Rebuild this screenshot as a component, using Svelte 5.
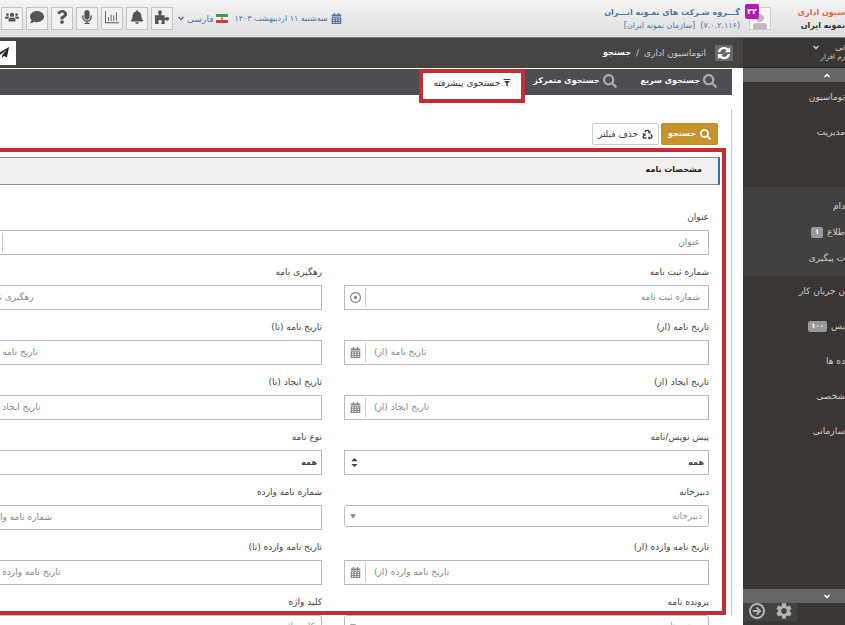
<script>
  /*
    Advanced letter search — office automation shell.

    Right-to-left page: top header, side menu on the right,
    breadcrumb + search tabs above the filter form.
  */

  // [viewBox, path]
  const icons = {
    search: ["0 0 512 512", "M505 442.7L405.3 343c-4.5-4.5-10.6-7-17-7H372c27.6-35.3 44-79.7 44-128C416 93.1 322.9 0 208 0S0 93.1 0 208s93.1 208 208 208c48.3 0 92.7-16.4 128-44v16.3c0 6.4 2.5 12.5 7 17l99.7 99.7c9.4 9.4 24.6 9.4 33.9 0l28.3-28.3c9.4-9.4 9.4-24.6.1-34zM208 336c-70.7 0-128-57.2-128-128 0-70.7 57.2-128 128-128 70.7 0 128 57.2 128 128 0 70.7-57.2 128-128 128z"],
    bell: ["0 0 448 512", "M224 512c35.32 0 63.97-28.65 63.97-64H160.03c0 35.35 28.65 64 63.97 64zm215.39-149.71c-19.32-20.76-55.47-51.99-55.47-154.29 0-77.7-54.48-139.9-127.94-155.16V32c0-17.67-14.32-32-31.98-32s-31.98 14.33-31.98 32v20.84C118.56 68.1 64.08 130.3 64.08 208c0 102.3-36.15 133.53-55.47 154.29-6 6.45-8.66 14.16-8.61 21.71.11 16.4 12.98 32 32.1 32h383.8c19.12 0 32-15.6 32.1-32 .05-7.55-2.61-15.27-8.61-21.71z"],
    comment: ["0 0 512 512", "M256 32C114.6 32 0 125.1 0 240c0 49.6 21.4 95 57 130.7C44.5 421.1 2.7 466 2.2 466.5c-2.2 2.3-2.8 5.7-1.5 8.7S4.8 480 8 480c66.3 0 116-31.8 140.6-51.4 32.7 12.3 69 19.4 107.4 19.4 141.4 0 256-93.1 256-208S397.4 32 256 32z"],
    mic: ["0 0 352 512", "M176 352c53.02 0 96-42.98 96-96V96c0-53.02-42.98-96-96-96S80 42.98 80 96v160c0 53.02 42.98 96 96 96zm160-160h-16c-8.84 0-16 7.16-16 16v48c0 74.8-64.49 134.82-140.79 127.38C96.71 376.89 48 317.11 48 250.3V208c0-8.84-7.16-16-16-16H16c-8.84 0-16 7.16-16 16v40.16c0 89.64 63.97 169.55 152 181.69V464H96c-8.84 0-16 7.16-16 16v16c0 8.84 7.16 16 16 16h160c8.84 0 16-7.16 16-16v-16c0-8.84-7.16-16-16-16h-56v-33.77C285.71 418.47 352 344.9 352 256v-48c0-8.84-7.16-16-16-16z"],
    question: ["0 0 384 512", "M202.021 0C122.202 0 70.503 32.703 29.914 91.026c-7.363 10.58-5.093 25.086 5.178 32.874l43.138 32.709c10.373 7.865 25.132 6.026 33.253-4.148 25.049-31.381 43.63-49.449 82.757-49.449 30.764 0 68.816 19.799 68.816 49.631 0 22.552-18.617 34.134-48.993 51.164-35.423 19.86-82.299 44.576-82.299 106.405V320c0 13.255 10.745 24 24 24h72.471c13.255 0 24-10.745 24-24v-5.773c0-42.86 125.268-44.645 125.268-160.627C377.504 66.256 286.902 0 202.021 0zM192 373.459c-38.196 0-69.271 31.075-69.271 69.271 0 38.195 31.075 69.27 69.271 69.27s69.271-31.075 69.271-69.271-31.075-69.27-69.271-69.27z"],
    puzzle: ["0 0 16 16", "M0 6H4.300C4.900 5 3.500 4.200 3.500 2.700C3.500 1.200 4.500 .3 5.700 .3S7.900 1.200 7.900 2.700C7.900 4.200 6.600 5 7.100 6H11V8.800C11.800 9.300 12.600 8 13.900 8C15.200 8 16 8.900 16 10.100S15.200 12.200 13.900 12.200C12.600 12.200 11.800 10.900 11 11.400V16H7.300C6.800 15 7.900 14.500 7.900 13.300C7.900 12.200 7 11.500 5.800 11.500S3.700 12.200 3.700 13.300C3.700 14.500 4.800 15 4.300 16H0Z"],
    chart: ["0 0 16 16", "M0 1H1V14H16V15H0ZM3.500 8H4.500V12.500H3.500ZM6.500 5H7.500V12.500H6.500ZM9.500 6H10.500V12.500H9.500ZM12.500 2.500H13.500V12.500H12.500Z"],
    users: ["0 0 20 16", "M10 2a3 3 0 1 0 .01 0ZM3.500 2.500a2 2 0 1 0 .01 0ZM16.500 2.500a2 2 0 1 0 .01 0ZM5 14.500V12q0-3 3-3.200Q10 10 12 8.800Q15 9 15 12V14.500ZM0 10.500V9Q0 7.300 2 7.300H5Q6 7.300 6.400 8Q4.600 9 4.300 10.500ZM20 10.500V9Q20 7.300 18 7.300H15Q14 7.300 13.600 8Q15.400 9 15.700 10.500Z"],
    calendar: ["0 0 14 16", "M3 0H5V2H9V0H11V2H14V5H0V2H3ZM0 6H14V16H0ZM2 7.500V9H4V7.500ZM6 7.500V9H8V7.500ZM10 7.500V9H12V7.500ZM2 10.300V11.800H4V10.300ZM6 10.300V11.800H8V10.300ZM10 10.300V11.800H12V10.300ZM2 13V14.500H4V13ZM6 13V14.500H8V13ZM10 13V14.500H12V13Z"],
    plane: ["0 0 16 16", "M16 0L0 9.200L4 11L13 3.500L6 12V16L8.500 13L13 15Z"],
    filter: ["0 0 14 16", "M0 0H14V2H0ZM1 4H13L8.500 9V16L5.500 13V9Z"],
    refresh: ["0 0 16 16", "M1 7C1.400 3.500 4.300 1 8 1C10 1 11.600 1.700 13 3L15 1V7H9L11.200 4.800C10.300 4 9.200 3.500 8 3.500C5.800 3.500 4.200 4.900 3.700 7ZM15 9C14.600 12.500 11.700 15 8 15C6 15 4.400 14.300 3 13L1 15V9H7L4.800 11.200C5.700 12 6.800 12.500 8 12.500C10.200 12.500 11.800 11.100 12.300 9Z"],
    recycle: ["0 0 16 16", "M5 1H10L11.500 3.500L13 2.700L12 7L8 5.800L9.500 4.900L8.500 3H6.800L5.300 5.500L3.500 4.300ZM1.500 6L5.700 7L4.700 11L3.300 10.200L2.700 12H6.500V14.200H2L.3 11.500L2 8.500L.5 7.500ZM12.200 8L14 7L15.800 11L14 14.200H11V15.800L8 13L11 10.200V12H13L13.700 11Z"],
    down: ["0 0 10 7", "M1.500 0L5 3L8.500 0L10 2L5 7L0 2Z"],
    up: ["0 0 10 7", "M1.500 7L5 4L8.500 7L10 5L5 0L0 5Z"],
    sort: ["0 0 8 12", "M4 1L7.500 4.500H.5ZM.5 7.500H7.500L4 11Z"],
    caret: ["0 0 8 6", "M0 0H8L4 6Z"],
    target: ["0 0 16 16", "M8 0a8 8 0 1 0 .01 0ZM8 1.700a6.300 6.300 0 1 1-.01 0ZM8 5.500a2.500 2.500 0 1 0 .01 0Z"],
    arrow: ["0 0 16 16", "M8 0a8 8 0 1 0 .01 0ZM8 2a6 6 0 1 1-.01 0ZM3.800 7H8.800L6.900 5.100L8.300 3.700L12.500 8L8.300 12.300L6.900 10.900L8.800 9H3.800Z"],
    gear: ["2 2 20 20", "M19.14 12.94c.04-.3.06-.61.06-.94 0-.32-.02-.64-.07-.94l2.03-1.58c.18-.14.23-.41.12-.61l-1.92-3.32c-.12-.22-.37-.29-.59-.22l-2.39.96c-.5-.38-1.03-.7-1.62-.94l-.36-2.54c-.04-.24-.24-.41-.48-.41h-3.84c-.24 0-.43.17-.47.41l-.36 2.54c-.59.24-1.13.57-1.62.94l-2.39-.96c-.22-.08-.47 0-.59.22L2.74 8.87c-.12.21-.08.47.12.61l2.03 1.58c-.05.3-.09.63-.09.94s.02.64.07.94l-2.03 1.58c-.18.14-.23.41-.12.61l1.92 3.32c.12.22.37.29.59.22l2.39-.96c.5.38 1.03.7 1.62.94l.36 2.54c.05.24.24.41.48.41h3.84c.24 0 .44-.17.47-.41l.36-2.54c.59-.24 1.13-.56 1.62-.94l2.39.96c.22.08.47 0 .59-.22l1.92-3.32c.12-.22.07-.47-.12-.61l-2.01-1.58zM12 15.6c-1.98 0-3.6-1.62-3.6-3.6s1.62-3.6 3.6-3.6 3.6 1.62 3.6 3.6-1.62 3.6-3.6 3.6z"],
    person: ["0 0 16 16", "M8 1a4 4 0 1 0 .01 0ZM1 16V13Q1 10 5 10H11Q15 10 15 13V16Z"],
  };

  const tools = [
    { icon: "puzzle", label: "افزونه ها" },
    { icon: "bell", label: "اعلان ها" },
    { icon: "chart", label: "گزارش" },
    { icon: "mic", label: "صدا" },
    { icon: "question", label: "راهنما" },
    { icon: "comment", label: "گفتگو" },
    { icon: "users", label: "کاربران" },
  ];

  const menuTop = [{ text: "توماسیون" }, { text: "مدیریت" }];
  const menuOpen = [{ text: "دام" }, { text: "طلاع", count: "۱" }, { text: "ت پیگیری" }];
  const menuRest = [
    { text: "ن جریان کار" },
    { text: "یس", count: "۱۰۰" },
    { text: "ده ها" },
    { text: "شخصی" },
    { text: "سازمانی" },
  ];

  const fields = [
    { id: "reg", label: "شماره ثبت نامه", icon: "target" },
    { id: "track", label: "رهگیری نامه", end: true },
    { id: "date-from", label: "تاریخ نامه (از)", icon: "calendar", end: true },
    { id: "date-to", label: "تاریخ نامه (تا)", icon: "calendar", end: true },
    { id: "made-from", label: "تاریخ ایجاد (از)", icon: "calendar", end: true },
    { id: "made-to", label: "تاریخ ایجاد (تا)", icon: "calendar", end: true },
    { id: "draft", label: "پیش نویس/نامه", kind: "select" },
    { id: "type", label: "نوع نامه", kind: "select" },
    { id: "office", label: "دبیرخانه", kind: "combo" },
    { id: "in-no", label: "شماره نامه وارده", end: true },
    { id: "in-from", label: "تاریخ نامه وارده (از)", icon: "calendar", end: true },
    { id: "in-to", label: "تاریخ نامه وارده (تا)", icon: "calendar", end: true },
    { id: "file", label: "پرونده نامه", kind: "combo" },
    { id: "keyword", label: "کلید واژه", kind: "combo" },
  ];
</script>

{#snippet icon(name, size)}
  <svg class="icon icon--{size}" viewBox={icons[name][0]} aria-hidden="true">
    <path d={icons[name][1]} fill="currentColor" fill-rule="evenodd" />
  </svg>
{/snippet}

{#snippet menuItem(item)}
  <li>
    <a href="#menu">{item.text}</a>
    {#if item.count}<span class="count">{item.count}</span>{/if}
  </li>
{/snippet}

<div class="page" dir="rtl" lang="fa">
  <header class="header">
    <div class="brand">
      <strong class="brand-name">سیون اداری</strong>
      <strong>نمونه ایران</strong>
    </div>
    <div class="avatar">
      {@render icon("person", "l")}
      <span class="badge">۲۲</span>
    </div>
    <div class="company">
      <strong>گـــروه شـرکت های نمـونه ایـــران</strong>
      <span><small>(<bdi>۷.۰.۲.۱۱۶</bdi>)</small> &nbsp;[سازمان نمونه ایران]</span>
    </div>
    <div class="today">
      {@render icon("calendar", "s")}
      <span>سه‌شنبه ۱۱ اردیبهشت ۱۴۰۳</span>
    </div>
    <button class="lang">
      <svg class="flag" viewBox="0 0 12 9" aria-hidden="true">
        <rect width="12" height="9" fill="#f6f6f6" />
        <rect width="12" height="3" fill="#3d9a50" />
        <rect y="6" width="12" height="3" fill="#d83a36" />
        <circle cx="6" cy="4.5" r="1" fill="#d83a36" />
      </svg>
      <span>فارسی</span>
      {@render icon("down", "xxs")}
    </button>
    <nav class="tools">
      {#each tools as tool}
        <button aria-label={tool.label}>{@render icon(tool.icon, "m")}</button>
      {/each}
    </nav>
  </header>

  <div class="body">
    <aside class="side">
      <div class="user">
        <div class="user-row">
          <span>نی</span>
          {@render icon("down", "xxs")}
        </div>
        <small>رم افزار</small>
      </div>
      <button class="scroll" aria-label="بالا">{@render icon("up", "xxs")}</button>
      <nav class="menu">
        <ul>
          {#each menuTop as item}{@render menuItem(item)}{/each}
        </ul>
        <ul class="menu-open">
          {#each menuOpen as item}{@render menuItem(item)}{/each}
        </ul>
        <ul>
          {#each menuRest as item}{@render menuItem(item)}{/each}
        </ul>
      </nav>
      <button class="scroll" aria-label="پایین">{@render icon("down", "xxs")}</button>
      <div class="side-foot">
        <button aria-label="بستن منو">{@render icon("arrow", "l")}</button>
        <button aria-label="تنظیمات">{@render icon("gear", "l")}</button>
      </div>
    </aside>

    <main class="main">
      <div class="crumbs">
        <button class="reload" aria-label="بارگذاری">{@render icon("refresh", "m")}</button>
        <a href="#home">اتوماسیون اداری</a>
        <span>/</span>
        <strong>جستجو</strong>
        <button class="send" aria-label="ارسال">{@render icon("plane", "s")}</button>
      </div>

      <nav class="tabs">
        <a class="tab" href="#quick">{@render icon("search", "m")}جستجوی سریع</a>
        <a class="tab" href="#focused">{@render icon("search", "m")}جستجوی متمرکز</a>
        <a class="tab tab--active" href="#advanced">{@render icon("filter", "xs")}جستجوی پیشرفته</a>
      </nav>

      <form class="panel">
        <div class="actions">
          <button type="submit" class="btn btn--gold">{@render icon("search", "s")}جستجو</button>
          <button type="reset" class="btn">{@render icon("recycle", "s")}حذف فیلتر</button>
        </div>

        <div class="marked">
          <h2>مشخصات نامه</h2>
          <div class="grid">
            <div class="field field--wide">
              <label for="title">عنوان</label>
              <div class="control">
                <input id="title" placeholder="عنوان" />
                <span class="addon addon--wide"></span>
              </div>
            </div>
            {#each fields as f}
              <div class="field">
                <label for={f.id}>{f.label}</label>
                {#if f.kind === "select"}
                  <div class="control">
                    <select id={f.id}><option>همه</option></select>
                    <span class="arrow">{@render icon("sort", "s")}</span>
                  </div>
                {:else if f.kind === "combo"}
                  <div class="control control--combo">
                    <select id={f.id}><option>{f.label}</option></select>
                    <span class="arrow">{@render icon("caret", "xxs")}</span>
                  </div>
                {:else}
                  <div class="control">
                    <input id={f.id} class:end={f.end} placeholder={f.label} />
                    <span class="addon">
                      {#if f.icon}{@render icon(f.icon, "s")}{/if}
                    </span>
                  </div>
                {/if}
              </div>
            {/each}
          </div>
        </div>
      </form>
    </main>
  </div>
</div>

<style>
  :global(body) { background: #fff; }

  .page {
    --blue: #4878a8;
    --mark: #c42d33;
    height: 100vh;
    overflow: hidden;
    display: flex;
    flex-direction: column;
    font-family: "DejaVu Sans", sans-serif;
    font-size: 9px;
    line-height: 12px;
    color: #444;
  }
  .page * { box-sizing: border-box; }
  button, input, select { font: inherit; color: inherit; margin: 0; }
  button { padding: 0; border: 0; background: none; }
  a { color: inherit; text-decoration: none; }
  ul { list-style: none; margin: 0; padding: 0; }
  strong { font-size: 8px; }

  .icon { display: block; flex: none; }
  .icon--xxs { width: 6px; height: 5px; }
  .icon--xs { width: 8px; height: 8px; }
  .icon--s { width: 11px; height: 11px; }
  .icon--m { width: 14px; height: 14px; }
  .icon--l { width: 16px; height: 16px; }

  /* Header */
  .header {
    flex: none;
    display: flex;
    align-items: center;
    height: 38px;
    border-bottom: 1px solid #777;
    background: linear-gradient(#f4f4f4, #dedede);
  }
  .brand {
    flex: none;
    width: 46px;
    white-space: nowrap;
    line-height: 13px;
    color: #333;
  }
  .brand strong { display: block; }
  .brand .brand-name { color: #e8683c; }
  .avatar {
    position: relative;
    display: flex;
    align-items: flex-end;
    justify-content: center;
    width: 22px;
    height: 23px;
    margin-right: 28px;
    border: 1px solid #ccc;
    background: #f6f6f6;
    color: #c0b8bc;
  }
  .badge {
    position: absolute;
    left: -5px;
    top: -4px;
    width: 14px;
    border-radius: 2px;
    background: #b41cb4;
    color: #fff;
    font-size: 8px;
    font-weight: bold;
    line-height: 15px;
    text-align: center;
  }
  .company {
    display: flex;
    flex-direction: column;
    margin-right: 9px;
    color: var(--blue);
    line-height: 13px;
    white-space: nowrap;
  }
  .company span, .company small { font-size: 8px; }
  .today {
    display: flex;
    align-items: center;
    gap: 3px;
    margin-right: auto;
    color: var(--blue);
    font-size: 8px;
    white-space: nowrap;
  }
  .lang {
    display: flex;
    align-items: center;
    gap: 3px;
    margin: 0 6px 0 5px;
    color: var(--blue);
  }
  .flag { width: 12px; height: 9px; }
  .tools { display: flex; gap: 3px; padding-left: 1px; }
  .tools button {
    display: flex;
    align-items: center;
    justify-content: center;
    width: 22px;
    height: 23px;
    padding-bottom: 3px;
    border: 1px solid #c4c4c4;
    background: #f1f1f1;
    color: #555;
  }

  .body { flex: 1; display: flex; min-height: 0; }

  /* Side menu */
  .side {
    flex: none;
    display: flex;
    flex-direction: column;
    width: 102px;
    background: #3a3633;
    color: #d2cecb;
  }
  .user {
    flex: none;
    display: flex;
    flex-direction: column;
    height: 30px;
    padding-top: 4px;
    border-bottom: 1px solid #222;
    line-height: 10px;
  }
  .user small { font-size: 7px; }
  .user-row { display: flex; align-items: center; gap: 16px; }
  .scroll {
    flex: none;
    display: flex;
    align-items: center;
    height: 14px;
    padding-right: 15px;
    background: #666;
    color: #fff;
  }
  .menu { flex: 1; min-height: 0; padding-top: 5px; }
  .menu ul { display: flex; flex-direction: column; gap: 15px; }
  .menu li {
    display: flex;
    align-items: center;
    gap: 4px;
    height: 20px;
    white-space: nowrap;
  }
  .menu .menu-open {
    gap: 6px;
    margin: 45px 0 5px;
    padding: 9px 0 8px;
    background: #41403e;
  }
  .count {
    min-width: 12px;
    padding: 0 3px;
    border-radius: 2px;
    background: #98989a;
    color: #fff;
    font-size: 7px;
    font-weight: bold;
    line-height: 11px;
    text-align: center;
  }
  .side-foot {
    flex: none;
    display: flex;
    direction: ltr;
    height: 22px;
    color: #b4b4b4;
  }
  .side-foot button {
    display: flex;
    justify-content: center;
    width: 27px;
    height: 18px;
    background: #44423f;
  }

  /* Breadcrumb and tabs */
  .main { flex: 1; min-width: 0; overflow: hidden; background: #fff; }
  .crumbs {
    display: flex;
    align-items: center;
    gap: 5px;
    height: 30px;
    padding: 0 10px 1px 0;
    background: #464442;
    color: #ccc;
  }
  .crumbs strong { color: #fff; }
  .reload {
    display: flex;
    align-items: center;
    justify-content: center;
    width: 18px;
    height: 16px;
    margin-left: 4px;
    background: #6a6866;
    color: #fff;
  }
  .send {
    display: flex;
    align-items: center;
    justify-content: flex-end;
    direction: ltr;
    width: 16px;
    height: 24px;
    padding-right: 7px;
    margin-right: auto;
    background: #fff;
    color: #222;
  }
  .tabs {
    display: flex;
    gap: 24px;
    height: 26px;
    margin: 1px 11px 0 0;
    padding-right: 15px;
    background: #4c4e54;
    color: #fff;
  }
  .tab {
    display: flex;
    align-items: center;
    gap: 3px;
    height: 23px;
    font-size: 8px;
    font-weight: bold;
    white-space: nowrap;
  }
  .tab .icon { color: #aaa; }
  .tab--active {
    justify-content: center;
    width: 106px;
    height: 34px;
    margin-right: -16px;
    padding-bottom: 6px;
    border: 4px solid var(--mark);
    background: #fff;
    color: #333;
    font-size: 9px;
    font-weight: normal;
  }
  .tab--active .icon { color: #444; }

  /* Filter form */
  .panel {
    margin: 14px 11px 0 0;
    padding-top: 14px;
    border-right: 1px solid #ccc;
  }
  .actions { display: flex; gap: 2px; height: 22px; margin: 0 13px 3px 0; }
  .btn {
    display: flex;
    align-items: center;
    justify-content: center;
    gap: 4px;
    min-width: 67px;
    border: 1px solid #ccc;
    border-radius: 2px;
    background: #fff;
  }
  .btn--gold {
    min-width: 57px;
    border-color: #c08b24;
    background: #c8922c;
    color: #fff;
    font-size: 8px;
    font-weight: bold;
  }
  .marked {
    height: 467px;
    margin-right: 5px;
    padding-top: 5px;
    border: 4px solid var(--mark);
    border-left: 0;
  }
  h2 {
    margin: 0 2px 22px 0;
    padding: 0 16px 2px;
    border: 1px solid #8a8a8a;
    border-width: 1px 2px 1px 0;
    border-right-color: #2f6fae;
    background: #f1f0ef;
    color: #222;
    font-size: 8px;
    line-height: 24px;
  }
  .grid {
    display: grid;
    grid-template-columns: 1fr 1fr;
    gap: 7px 22px;
    margin: 0 13px 0 -43px;
  }
  .field { display: flex; flex-direction: column; gap: 3px; height: 48px; }
  .field--wide { grid-column: 1 / -1; }
  label { line-height: 20px; }
  .control {
    position: relative;
    display: flex;
    align-items: center;
    height: 25px;
    border: 1px solid #bbb;
    background: #fff;
  }
  .control input, .control select {
    flex: 1;
    min-width: 0;
    height: 100%;
    padding: 0 8px 2px;
    border: 0;
    outline: 0;
    background: none;
    appearance: none;
  }
  .control select { padding: 0 4px; font-size: 8px; font-weight: bold; }
  .control input::placeholder { color: #888; opacity: 1; }
  .control input.end { text-align: left; }
  .control--combo { height: 22px; border-radius: 3px; }
  .control--combo select { padding: 0 6px; color: #999; font-size: 9px; font-weight: normal; }
  .addon {
    display: flex;
    align-items: center;
    justify-content: center;
    width: 21px;
    height: 19px;
    border-right: 1px solid #ccc;
    color: #888;
  }
  .addon--wide { width: 45px; }
  .arrow { position: absolute; left: 4px; color: #444; pointer-events: none; }
  .control--combo .arrow { left: 5px; color: #888; }
</style>
